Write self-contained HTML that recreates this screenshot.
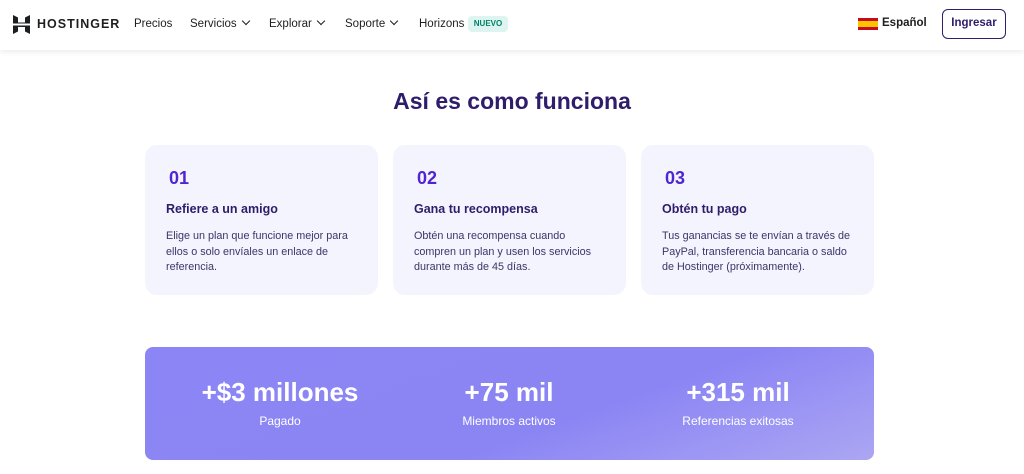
<!DOCTYPE html>
<html><head><meta charset="utf-8"><style>
*{margin:0;padding:0;box-sizing:border-box}
body{width:1024px;height:474px;overflow:hidden;background:#fff;font-family:"Liberation Sans",sans-serif;position:relative}
.hdr{position:absolute;left:0;top:0;width:1024px;height:50px;background:#fff;box-shadow:0 2px 6px rgba(0,0,0,.08)}
.a{position:absolute;white-space:nowrap}
.nav{font-size:11.5px;color:#1d1e20;top:17px}
.chev{display:inline-block;width:6px;height:6px;border-right:1.5px solid #1d1e20;border-bottom:1.5px solid #1d1e20;transform:rotate(45deg);margin-left:6px;position:relative;top:-3px}
h1{position:absolute;left:0;width:1024px;text-align:center;top:88px;font-size:23px;color:#2f1c6a;font-weight:bold}
.card{position:absolute;top:145px;width:233px;height:150px;background:#f4f4ff;border-radius:12px}
.num{position:absolute;left:24px;top:23px;font-size:18px;font-weight:bold;color:#5025d1}
.ct{position:absolute;left:21px;top:57px;font-size:12.5px;font-weight:bold;color:#2f1c6a}
.cb{position:absolute;left:21px;top:84px;width:215px;font-size:10.8px;line-height:15.5px;color:#3b3566;white-space:nowrap}
.stats{position:absolute;left:145px;top:347px;width:729px;height:113px;border-radius:8px;background:linear-gradient(160deg,#8c85f5 0%,#8b85f4 60%,#aca6f3 100%)}
.sn{position:absolute;top:30px;width:260px;text-align:center;font-size:26px;font-weight:bold;color:#fff}
.sl{position:absolute;top:67px;width:260px;text-align:center;font-size:12px;color:#fff}
</style></head><body>
<div class="hdr">
<svg class="a" style="left:13px;top:15px" width="17" height="19" viewBox="0 0 17 19"><path d="M0 0l5 2.5v5l7 0V2.5L17 0v8.5H0z" fill="#1d1e20"/><path d="M0 10.5h17V19l-5-2.5v-4.5H5v4.5L0 19z" fill="#1d1e20"/></svg>
<div class="a" style="left:37px;top:17px;font-size:12.5px;font-weight:bold;letter-spacing:1px;color:#1d1e20">HOSTINGER</div>
<div class="a nav" style="left:134px;top:18px">Precios</div>
<div class="a nav" style="left:190px;top:18px">Servicios<span class="chev"></span></div>
<div class="a nav" style="left:269px;top:18px">Explorar<span class="chev"></span></div>
<div class="a nav" style="left:345px;top:18px">Soporte<span class="chev"></span></div>
<div class="a nav" style="left:419px;top:18px">Horizons</div>
<div class="a" style="left:468px;top:16px;width:40px;height:16px;background:#def4f0;border-radius:4px;font-size:8px;font-weight:bold;color:#00836a;text-align:center;line-height:16px">NUEVO</div>
<div class="a" style="left:858px;top:18px;width:20px;height:12px;background:linear-gradient(#c60b1e 0 25%,#ffc400 25% 75%,#c60b1e 75%)"></div>
<div class="a" style="left:882px;top:17px;font-size:11.5px;font-weight:bold;color:#1d1e20">Español</div>
<div class="a" style="left:942px;top:9px;width:64px;height:30px;border:1.5px solid #2f1c6a;border-radius:6px;font-size:11.5px;font-weight:bold;color:#2f1c6a;text-align:center;line-height:27px">Ingresar</div>
</div>
<h1>Así es como funciona</h1>
<div class="card" style="left:145px"><div class="num">01</div><div class="ct">Refiere a un amigo</div><div class="cb">Elige un plan que funcione mejor para<br>ellos o solo envíales un enlace de<br>referencia.</div></div>
<div class="card" style="left:393px"><div class="num">02</div><div class="ct">Gana tu recompensa</div><div class="cb">Obtén una recompensa cuando<br>compren un plan y usen los servicios<br>durante más de 45 días.</div></div>
<div class="card" style="left:641px"><div class="num">03</div><div class="ct">Obtén tu pago</div><div class="cb">Tus ganancias se te envían a través de<br>PayPal, transferencia bancaria o saldo<br>de Hostinger (próximamente).</div></div>
<div class="stats">
<div class="sn" style="left:5px">+$3 millones</div><div class="sl" style="left:5px">Pagado</div>
<div class="sn" style="left:234px">+75 mil</div><div class="sl" style="left:234px">Miembros activos</div>
<div class="sn" style="left:463px">+315 mil</div><div class="sl" style="left:463px">Referencias exitosas</div>
</div>
</body></html>
